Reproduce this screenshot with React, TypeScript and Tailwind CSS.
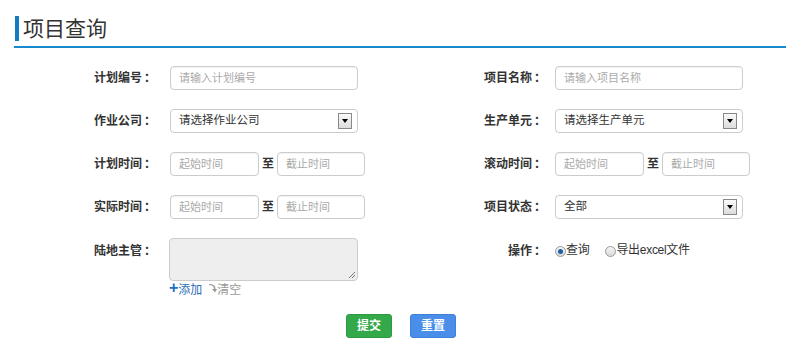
import React from 'react';

const font = { fontFamily: '"Liberation Sans", "Noto Sans CJK SC", sans-serif' };

const Label = ({ text, w }: { text: string; w: string }) => (
  <div className={`${w} shrink-0 flex justify-end text-[12px] font-bold text-[#333] leading-6`}>
    <span>{text}</span>
    <span className="ml-[2px] w-[12px]">：</span>
  </div>
);

const TextInput = ({ placeholder, w }: { placeholder: string; w: string }) => (
  <div className={`${w} h-6 border border-[#ccc] rounded-[4px] bg-white px-2 text-[11px] leading-[22px] text-[#aaa] shadow-[inset_0_1px_1px_rgba(0,0,0,0.05)]`}>
    {placeholder}
  </div>
);

const Select = ({ value }: { value: string }) => (
  <div className="w-[188px] h-6 border border-[#ccc] rounded-[4px] bg-white pl-2 pr-[5px] flex items-center justify-between text-[11.5px] text-[#333]">
    <span>{value}</span>
    <span className="w-[14px] h-[16px] border border-[#888] bg-gradient-to-b from-[#fafafa] to-[#dcdcdc] flex items-center justify-center">
      <span className="w-0 h-0 border-l-[3px] border-r-[3px] border-t-[4px] border-l-transparent border-r-transparent border-t-black" />
    </span>
  </div>
);

const DateRange = () => (
  <div className="flex items-center">
    <TextInput placeholder="起始时间" w="w-[89px]" />
    <span className="w-[18px] text-center text-[12px] text-[#333] font-bold">至</span>
    <TextInput placeholder="截止时间" w="w-[88px]" />
  </div>
);

const Radio = ({ checked, label }: { checked?: boolean; label: string }) => (
  <label className="flex items-center text-[12px] text-[#333]">
    <span className="w-[11px] h-[11px] rounded-full border border-[#999] bg-gradient-to-b from-[#f6f6f6] to-[#d8d8d8] flex items-center justify-center">
      {checked && <span className="w-[5px] h-[5px] rounded-full bg-[#1a5fa8]" />}
    </span>
    <span className="-mt-[3px] tracking-[-0.3px]">{label}</span>
  </label>
);

export default function App() {
  return (
    <div className="w-[800px] h-[363px] bg-white overflow-hidden" style={font}>
      <div className="pt-[16px] px-[14px]">
        <div className="flex items-center h-[25px]">
          <span className="w-[4px] h-[25px] bg-[#0f7cc4] ml-[1px]" />
          <span className="ml-[4px] text-[21px] text-[#333] leading-[25px]">项目查询</span>
        </div>
        <div className="mt-[5px] h-[2px] bg-[#1689cf]" />
      </div>

      <div className="mt-[18px] flex flex-col gap-[19px]">
        <div className="flex">
          <div className="w-[400px] flex items-center">
            <Label text="计划编号" w="w-[156px]" />
            <div className="ml-[14px]"><TextInput placeholder="请输入计划编号" w="w-[188px]" /></div>
          </div>
          <div className="flex items-center">
            <Label text="项目名称" w="w-[146px]" />
            <div className="ml-[9px]"><TextInput placeholder="请输入项目名称" w="w-[188px]" /></div>
          </div>
        </div>

        <div className="flex">
          <div className="w-[400px] flex items-center">
            <Label text="作业公司" w="w-[156px]" />
            <div className="ml-[14px]"><Select value="请选择作业公司" /></div>
          </div>
          <div className="flex items-center">
            <Label text="生产单元" w="w-[146px]" />
            <div className="ml-[9px]"><Select value="请选择生产单元" /></div>
          </div>
        </div>

        <div className="flex">
          <div className="w-[400px] flex items-center">
            <Label text="计划时间" w="w-[156px]" />
            <div className="ml-[14px]"><DateRange /></div>
          </div>
          <div className="flex items-center">
            <Label text="滚动时间" w="w-[146px]" />
            <div className="ml-[9px]"><DateRange /></div>
          </div>
        </div>

        <div className="flex">
          <div className="w-[400px] flex items-center">
            <Label text="实际时间" w="w-[156px]" />
            <div className="ml-[14px]"><DateRange /></div>
          </div>
          <div className="flex items-center">
            <Label text="项目状态" w="w-[146px]" />
            <div className="ml-[9px]"><Select value="全部" /></div>
          </div>
        </div>

        <div className="flex">
          <div className="w-[400px] flex items-start">
            <div className="pt-[1px]"><Label text="陆地主管" w="w-[156px]" /></div>
            <div className="ml-[13px]">
              <div className="relative w-[189px] h-[43px] border border-[#ccc] rounded-[4px] bg-[#eee]">
                <svg className="absolute right-[1px] bottom-[1px]" width="8" height="8" viewBox="0 0 8 8">
                  <path d="M7 1 L1 7 M7 4 L4 7" stroke="#777" strokeWidth="1" />
                </svg>
              </div>
              <div className="flex items-center text-[12px] mt-[1px] leading-4">
                <span className="text-[#1e6ec8] font-bold text-[16px] leading-none -mt-[4px]">+</span>
                <span className="text-[#2f6db5]">添加</span>
                <svg className="ml-[6px] -mt-[4px]" width="9" height="9" viewBox="0 0 9 9">
                  <path d="M1 1 Q6 1 6 5 L4 5 L7 8.5 L9 5 L7.5 5 Q7.5 0 1 0 Z" fill="#999" />
                </svg>
                <span className="text-[#999]">清空</span>
              </div>
            </div>
          </div>
          <div className="flex items-start">
            <div className="pt-[1px]"><Label text="操作" w="w-[146px]" /></div>
            <div className="ml-[9px] pt-[6px] flex items-center gap-[16px]">
              <Radio checked label="查询" />
              <Radio label="导出excel文件" />
            </div>
          </div>
        </div>
      </div>

      <div className="mt-[16px] flex justify-center gap-[18px] pl-[2px]">
        <button className="w-[46px] h-[24px] rounded-[3px] bg-[#34a94a] border border-[#2d9a40] text-white text-[12px] font-bold">提交</button>
        <button className="w-[46px] h-[24px] rounded-[3px] bg-[#4a8ee9] border border-[#3f80d8] text-white text-[12px] font-bold">重置</button>
      </div>
    </div>
  );
}
